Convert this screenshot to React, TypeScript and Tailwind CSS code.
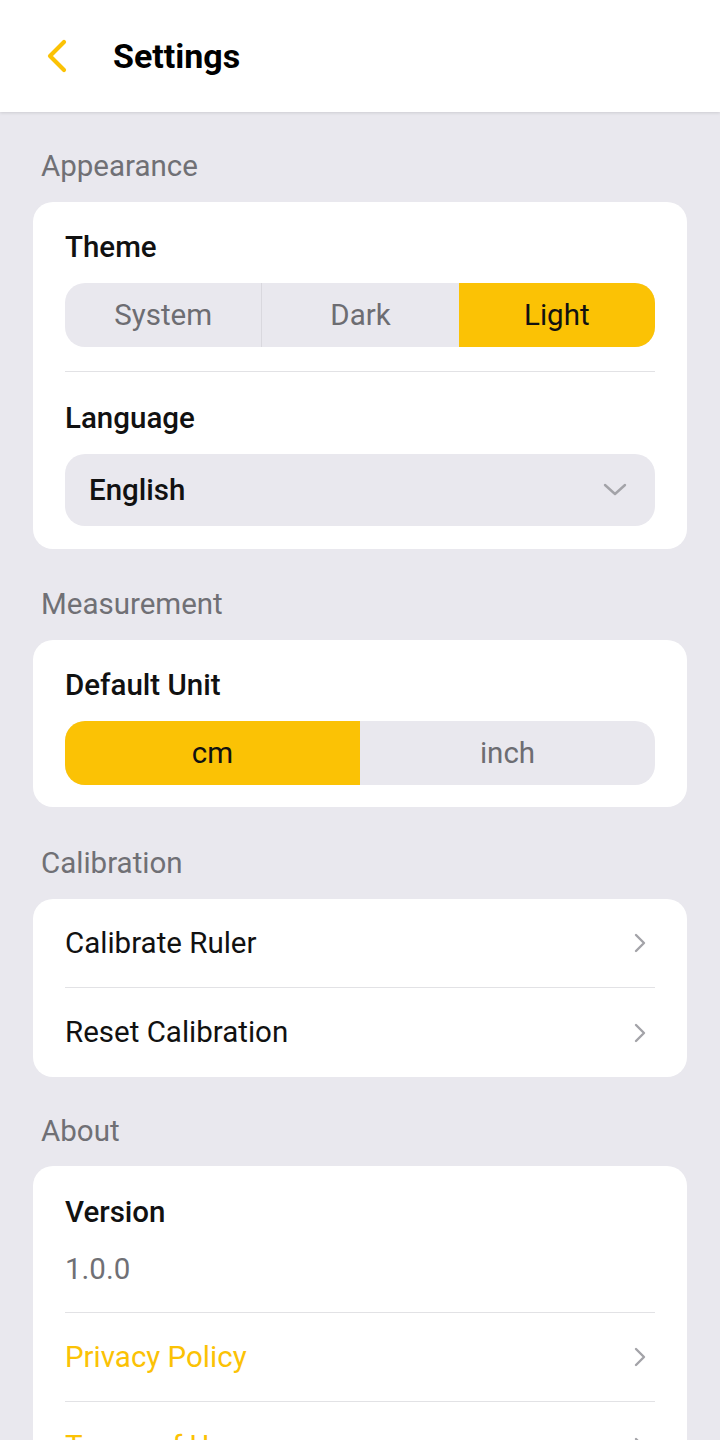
import { useState } from 'react';

const YELLOW = 'bg-[#fbc205]';

function ChevronRight() {
  return (
    <svg width="14" height="20" viewBox="0 0 14 20" fill="none" className="shrink-0">
      <path d="M3 2 L11 10 L3 18" stroke="#a3a3a8" strokeWidth="2.4" strokeLinecap="round" strokeLinejoin="round" />
    </svg>
  );
}

function SectionLabel({ children, spacing }: { children: string; spacing: string }) {
  return (
    <div className={`${spacing} px-[41px] text-[29.5px] leading-10 text-[#707075]`}>{children}</div>
  );
}

function Segmented({
  options,
  value,
  onChange,
}: {
  options: string[];
  value: string;
  onChange: (v: string) => void;
}) {
  return (
    <div className="flex h-16 overflow-hidden rounded-[20px] bg-[#e9e8ee]">
      {options.map((o, i) => {
        const active = o === value;
        const nextActive = options[i + 1] === value;
        const showDivider = i < options.length - 1 && !active && !nextActive;
        return (
          <button
            key={o}
            onClick={() => onChange(o)}
            className={`flex flex-1 items-center justify-center text-[29.5px] ${
              active ? `${YELLOW} text-[#111]` : 'text-[#6d6d72]'
            } ${showDivider ? 'border-r border-[#d9d8de]' : ''}`}
          >
            {o}
          </button>
        );
      })}
    </div>
  );
}

function LinkRow({ label, yellow, border }: { label: string; yellow?: boolean; border?: boolean }) {
  return (
    <div className={`flex h-[89px] items-center justify-between pr-2 ${border ? 'border-b border-[#e2e2e5]' : ''}`}>
      <span className={`text-[29.5px] ${yellow ? 'text-[#fbc205]' : 'text-[#111]'}`}>{label}</span>
      <ChevronRight />
    </div>
  );
}

export default function App() {
  const [theme, setTheme] = useState('Light');
  const [unit, setUnit] = useState('cm');

  return (
    <div className="min-h-[1440px] w-[720px] bg-[#e9e8ee] pb-10" style={{ fontFamily: 'Roboto, "Liberation Sans", sans-serif' }}>
      {/* Header */}
      <header className="flex h-28 items-center bg-white shadow-[0_1px_3px_rgba(0,0,0,0.12)]">
        <div className="flex w-[113px] items-center pl-[44px]">
          <svg width="26" height="36" viewBox="0 0 26 36" fill="none">
            <path d="M20 4 L6 18 L20 32" stroke="#fbc205" strokeWidth="4.2" strokeLinecap="round" strokeLinejoin="round" />
          </svg>
        </div>
        <h1 className="text-[34px] font-bold text-black">Settings</h1>
      </header>

      {/* Appearance */}
      <SectionLabel spacing="mt-[34px] mb-4">Appearance</SectionLabel>
      <div className="mx-[33px] rounded-[20px] bg-white px-8 pb-[23px] pt-[25px]">
        <div className="mb-4 text-[29.5px] font-medium leading-10 text-[#111]">Theme</div>
        <Segmented options={['System', 'Dark', 'Light']} value={theme} onChange={setTheme} />
        <div className="mt-6 h-px bg-[#e2e2e5]" />
        <div className="mb-4 mt-[26px] text-[29.5px] font-medium leading-10 text-[#111]">Language</div>
        <div className="flex h-[72px] items-center justify-between rounded-[20px] bg-[#e9e8ee] pl-6 pr-7">
          <span className="text-[29.5px] font-medium text-[#111]">English</span>
          <svg width="24" height="14" viewBox="0 0 24 14" fill="none">
            <path d="M2 2 L12 11 L22 2" stroke="#a3a3a8" strokeWidth="2.4" strokeLinecap="round" strokeLinejoin="round" />
          </svg>
        </div>
      </div>

      {/* Measurement */}
      <SectionLabel spacing="mt-[35px] mb-4">Measurement</SectionLabel>
      <div className="mx-[33px] rounded-[20px] bg-white px-8 pb-[22px] pt-[25px]">
        <div className="mb-4 text-[29.5px] font-medium leading-10 text-[#111]">Default Unit</div>
        <Segmented options={['cm', 'inch']} value={unit} onChange={setUnit} />
      </div>

      {/* Calibration */}
      <SectionLabel spacing="mt-9 mb-4">Calibration</SectionLabel>
      <div className="mx-[33px] rounded-[20px] bg-white px-8">
        <LinkRow label="Calibrate Ruler" border />
        <LinkRow label="Reset Calibration" />
      </div>

      {/* About */}
      <SectionLabel spacing="mt-[34px] mb-[15px]">About</SectionLabel>
      <div className="mx-[33px] rounded-[20px] bg-white px-8 pt-[26px]">
        <div className="text-[29.5px] font-medium leading-10 text-[#111]">Version</div>
        <div className="mt-[17px] text-[29.5px] leading-10 text-[#707075]">1.0.0</div>
        <div className="mt-[23px] h-px bg-[#e2e2e5]" />
        <LinkRow label="Privacy Policy" yellow border />
        <LinkRow label="Terms of Use" yellow />
      </div>
    </div>
  );
}
